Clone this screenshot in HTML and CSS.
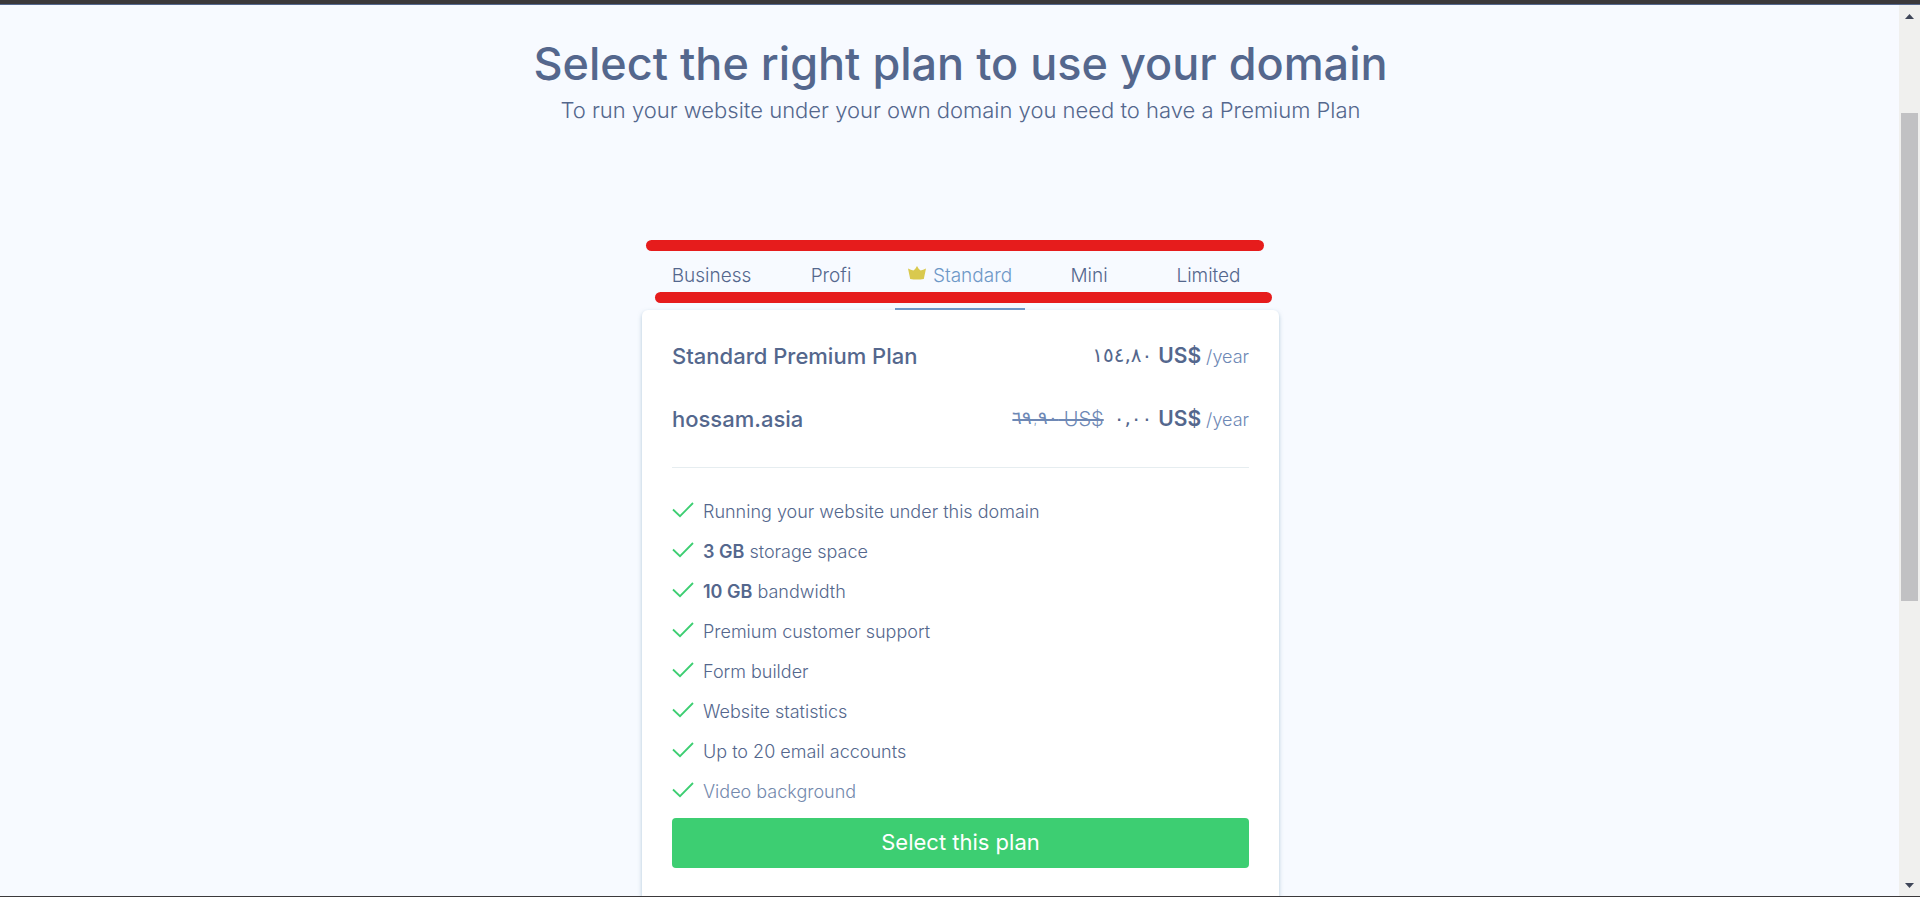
FILE: index.html
```html
<!DOCTYPE html>
<html lang="en">
<head>
<meta charset="utf-8">
<title>Select the right plan</title>
<link rel="stylesheet" href="styles.css">
</head>
<body>
<svg class="defs" aria-hidden="true">
  <symbol id="check" viewBox="0 0 22 16"><path d="M1 7.5 L8 14.2 L21 1" fill="none" stroke="#3dce72" stroke-width="1.8"/></symbol>
</svg>
<div class="window">
  <main class="page">
    <header class="intro">
      <h1 class="title">Select the right plan to use your domain</h1>
      <p class="subtitle">To run your website under your own domain you need to have a Premium Plan</p>
    </header>
    <section class="plans">
      <nav class="tabs" aria-label="Plans">
        <button class="tab" type="button">Business</button>
        <button class="tab" type="button">Profi</button>
        <button class="tab tab-active" type="button" aria-current="true">
          <svg class="crown" viewBox="0 0 18 14" aria-hidden="true"><path d="M0 2.6 Q3 4 5.4 4.4 Q7.6 3 9 0 Q10.4 3 12.6 4.4 Q15 4 18 2.6 L15.8 13 Q9 14.2 2.2 13 Z" fill="#d9c94e"/></svg>
          Standard
        </button>
        <button class="tab" type="button">Mini</button>
        <button class="tab" type="button">Limited</button>
        <span class="marker marker-top"></span>
        <span class="marker marker-bottom"></span>
      </nav>
      <article class="card">
        <div class="row">
          <h2 class="name">Standard Premium Plan</h2>
          <p class="price"><span class="digits">١٥٤,٨٠</span><strong class="currency">US$</strong><span class="period">/year</span></p>
        </div>
        <div class="row">
          <h2 class="name">hossam.asia</h2>
          <p class="price"><s class="old"><span class="old-digits">٦٩,٩٠</span> US$</s><span class="digits">٠,٠٠</span><strong class="currency">US$</strong><span class="period">/year</span></p>
        </div>
        <ul class="features">
          <li class="feature"><svg class="check"><use href="#check"/></svg><span>Running your website under this domain</span></li>
          <li class="feature"><svg class="check"><use href="#check"/></svg><span><b>3 GB</b> storage space</span></li>
          <li class="feature"><svg class="check"><use href="#check"/></svg><span><b>10 GB</b> bandwidth</span></li>
          <li class="feature"><svg class="check"><use href="#check"/></svg><span>Premium customer support</span></li>
          <li class="feature"><svg class="check"><use href="#check"/></svg><span>Form builder</span></li>
          <li class="feature"><svg class="check"><use href="#check"/></svg><span>Website statistics</span></li>
          <li class="feature"><svg class="check"><use href="#check"/></svg><span>Up to 20 email accounts</span></li>
          <li class="feature feature-faded"><svg class="check"><use href="#check"/></svg><span>Video background</span></li>
        </ul>
        <button class="select" type="button">Select this plan</button>
      </article>
    </section>
  </main>
  <div class="scrollbar" aria-hidden="true">
    <svg class="arrow" viewBox="0 0 9 5"><path d="M0 5 L4.5 0 L9 5 Z" fill="#3f4658"/></svg>
    <div class="track"><div class="thumb"></div></div>
    <svg class="arrow" viewBox="0 0 9 5"><path d="M0 0 L4.5 5 L9 0 Z" fill="#3f4658"/></svg>
  </div>
</div>
</body>
</html>
```

FILE: styles.css
```css
* { box-sizing: border-box; }
body {
  margin: 0;
  background: #f7faff;
  color: #54678d;
  font-family: Inter, "Liberation Sans", sans-serif;
}
h1, h2, p, ul { margin: 0; padding: 0; }
button { font-family: inherit; border: 0; cursor: pointer; }
.defs { display: none; }
.window {
  height: 100vh;
  overflow: hidden;
  display: grid;
  grid-template-columns: 1fr 21px;
  border-top: 4px solid #3b393b;
  border-bottom: 1px solid #3b393b;
}
.page {
  display: flex;
  flex-direction: column;
  align-items: center;
  padding: 32px 0 0 22px;
  border-top: 1px solid #54678d;
  min-height: 0;
}
.intro { text-align: center; height: 203px; }
.title { font-size: 45px; line-height: 54px; font-weight: 500; }
.subtitle { font-size: 22px; line-height: 32px; margin-top: 3px; font-weight: 300; }
.plans {
  flex: 1;
  display: flex;
  flex-direction: column;
  width: 637px;
  max-width: 100%;
}
.tabs {
  position: relative;
  z-index: 1;
  display: grid;
  grid-template-columns: 111fr 128fr 130fr 128fr 111fr;
  height: 70px;
  padding: 0 15px 0 14px;
}
.tab {
  display: flex;
  align-items: center;
  justify-content: center;
  gap: 7px;
  padding: 2px 0 0;
  background: none;
  border-bottom: 2px solid transparent;
  color: #54678d;
  font-size: 19px;
  font-weight: 300;
}
.tab-active { color: #6e98c7; border-bottom-color: #6e98c7; }
.crown { width: 18px; height: 14px; margin-bottom: 4px; }
.marker {
  position: absolute;
  height: 11px;
  border-radius: 6px;
  background: #e61c1c;
}
.marker-top { top: 0; left: 4px; right: 15px; }
.marker-bottom { top: 52px; left: 13px; right: 7px; }
.card {
  flex: 1;
  padding: 14px 30px 0;
  background: #fff;
  border-radius: 6px 6px 0 0;
  box-shadow: 0 2px 4px rgba(110, 152, 180, .5);
}
.row {
  display: flex;
  align-items: center;
  justify-content: space-between;
  height: 63px;
}
.name { font-size: 22px; font-weight: 500; }
.price { display: flex; align-items: baseline; }
.digits {
  align-self: center;
  font-family: "DejaVu Sans", sans-serif;
  font-size: 20px;
  line-height: 24px;
  padding-bottom: 2px;
  margin-right: 6px;
}
.currency { font-size: 21px; font-weight: 600; margin-right: 5px; }
.period { font-size: 18px; font-weight: 300; color: #6e88b5; }
.old { font-size: 20px; font-weight: 300; color: #6e88b5; margin-right: 10px; }
.old-digits {
  font-family: "DejaVu Sans", sans-serif;
  font-size: 18px;
  line-height: 20px;
  vertical-align: 2px;
}
.features {
  list-style: none;
  margin-top: 17px;
  padding-top: 23px;
  border-top: 1px solid #e6edf0;
}
.feature {
  display: flex;
  align-items: center;
  gap: 9px;
  height: 40px;
  font-size: 18px;
  font-weight: 300;
}
.feature b { font-weight: 600; }
.feature-faded { color: #7389ad; }
.check { width: 22px; height: 16px; margin-bottom: 2px; }
.select {
  display: block;
  width: 100%;
  height: 50px;
  margin-top: 7px;
  padding-bottom: 3px;
  border-radius: 4px;
  background: #3dce72;
  color: #fff;
  font-size: 22px;
}
.scrollbar {
  display: flex;
  flex-direction: column;
  align-items: center;
  gap: 8px;
  padding: 9px 1px 8px 1px;
  background: #f0f0ee;
  border-top: 1px solid #54678d;
}
.arrow { width: 9px; height: 5px; }
.track { flex: 1; width: 17px; padding-top: 86px; }
.thumb { height: 64%; min-height: 40px; background: #c1c1c3; }
```
